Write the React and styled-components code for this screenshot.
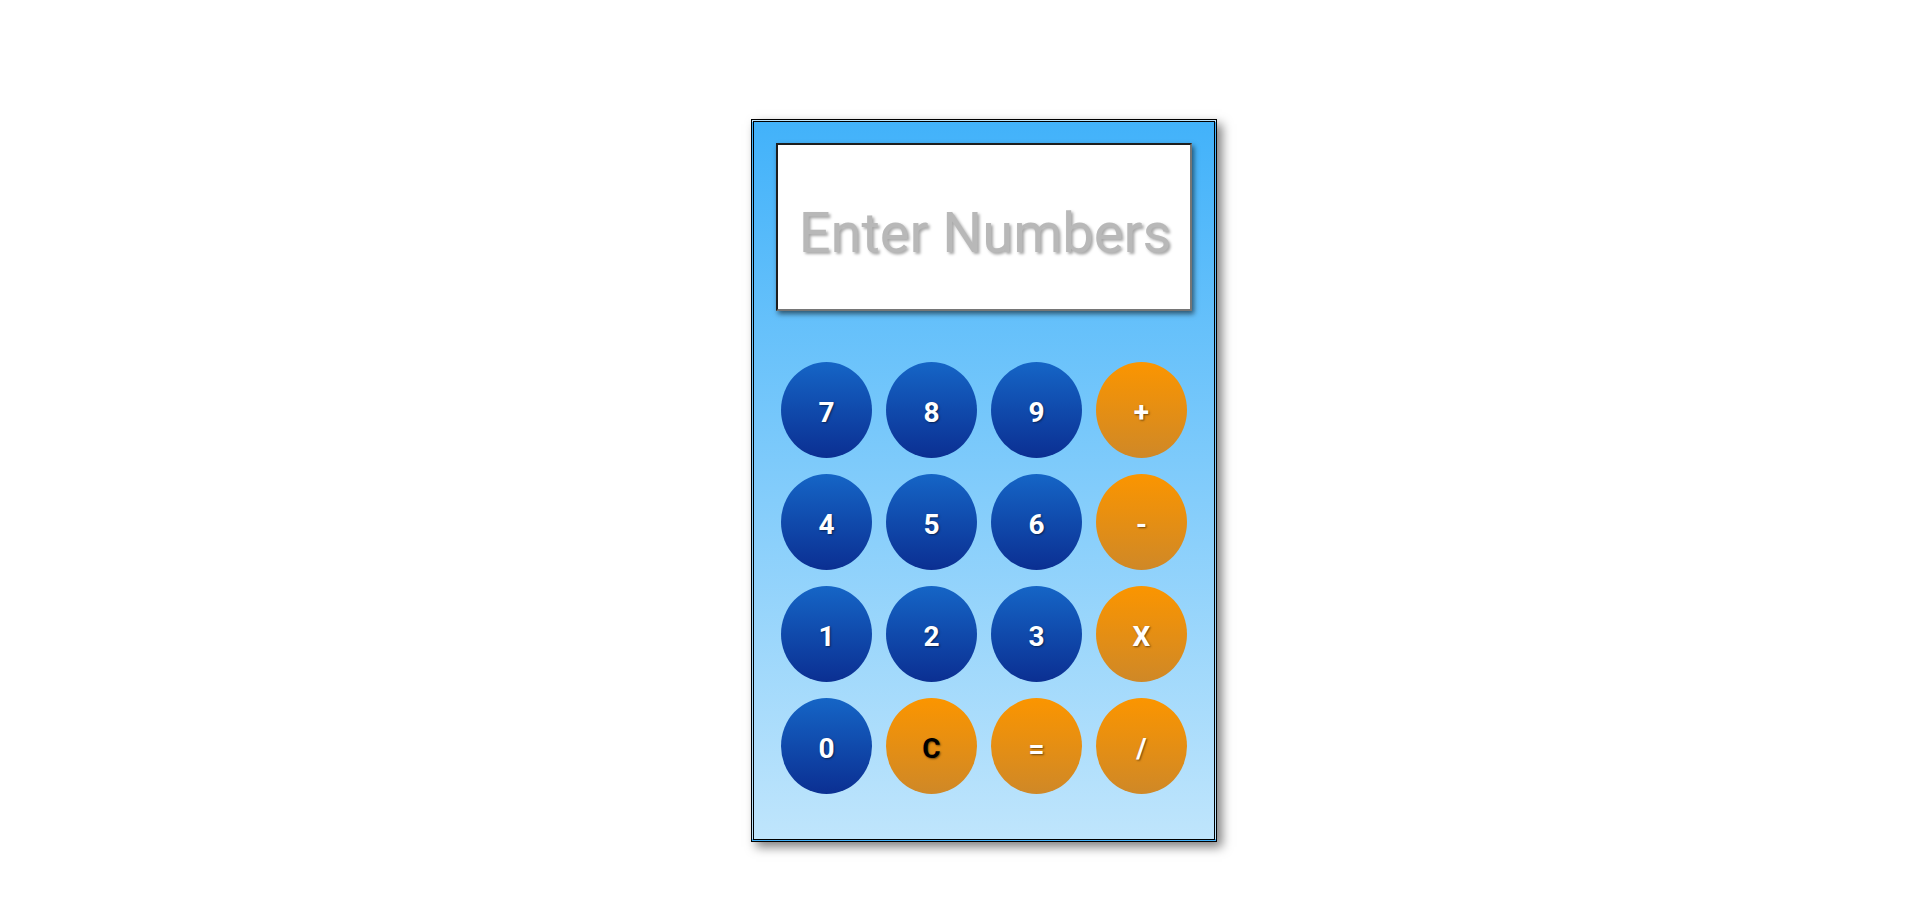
import styled, { createGlobalStyle } from "styled-components";

const GlobalStyle = createGlobalStyle`
  body {
    margin: 0;
    background: #fff;
    font-family: Roboto, "Liberation Sans", sans-serif;
  }
`;

const keys = [
  ["7", "num"],
  ["8", "num"],
  ["9", "num"],
  ["+", "op"],
  ["4", "num"],
  ["5", "num"],
  ["6", "num"],
  ["-", "op"],
  ["1", "num"],
  ["2", "num"],
  ["3", "num"],
  ["X", "op"],
  ["0", "num"],
  ["C", "clear"],
  ["=", "op"],
  ["/", "op"],
];

const App = () => {
  return (
    <Page>
      <GlobalStyle />
      <Calculator>
        <Display type="text" placeholder="Enter Numbers" />
        <Keypad>
          {keys.map(([label, kind]) => (
            <Key key={label} type="button" $kind={kind}>
              {label}
            </Key>
          ))}
        </Keypad>
      </Calculator>
    </Page>
  );
};

export default App;

const Page = styled.div`
  display: flex;
  justify-content: center;
  padding: 119px 0 0 48px;
  min-height: 912px;
  box-sizing: border-box;
`;

const Calculator = styled.div`
  width: 466px;
  height: 723px;
  box-sizing: border-box;
  border: 3px double #000;
  background: linear-gradient(to bottom, #42b2fa 0%, #bfe5fc 100%);
  box-shadow: 5px 5px 10px rgba(0, 0, 0, 0.5);
  padding: 21px 22px 0 22px;
  display: flex;
  flex-direction: column;
`;

const Display = styled.input`
  width: 416px;
  height: 168px;
  box-sizing: border-box;
  border-style: solid;
  border-width: 2px;
  border-color: #1e1e1e #767676 #767676 #1e1e1e;
  background: #fff;
  box-shadow: 2px 3px 5px rgba(0, 0, 0, 0.55);
  font-family: Roboto, "Liberation Sans", sans-serif;
  font-size: 56px;
  text-align: center;
  outline: none;
  padding: 12px 0 0 2px;

  &::placeholder {
    color: #b8b8b8;
    text-shadow: 2px 2px 3px rgba(0, 0, 0, 0.35);
  }
`;

const Keypad = styled.div`
  display: grid;
  grid-template-columns: repeat(4, 91px);
  grid-auto-rows: 96px;
  column-gap: 14px;
  row-gap: 16px;
  margin-top: 51px;
  padding-left: 5px;
`;

const Key = styled.button`
  border: none;
  border-radius: 50%;
  padding: 4px 0 0 0;
  font-family: Roboto, "Liberation Sans", sans-serif;
  font-size: 28px;
  font-weight: 700;
  color: ${({ $kind }) => ($kind === "clear" ? "#000" : "#fff")};
  text-shadow: 1px 1px 2px rgba(0, 0, 0, 0.5);
  background: ${({ $kind }) =>
    $kind === "num"
      ? "linear-gradient(to bottom, #1565c6 0%, #0b2f92 100%)"
      : "linear-gradient(to bottom, #fb9500 0%, #cf8827 100%)"};
  cursor: pointer;
`;
